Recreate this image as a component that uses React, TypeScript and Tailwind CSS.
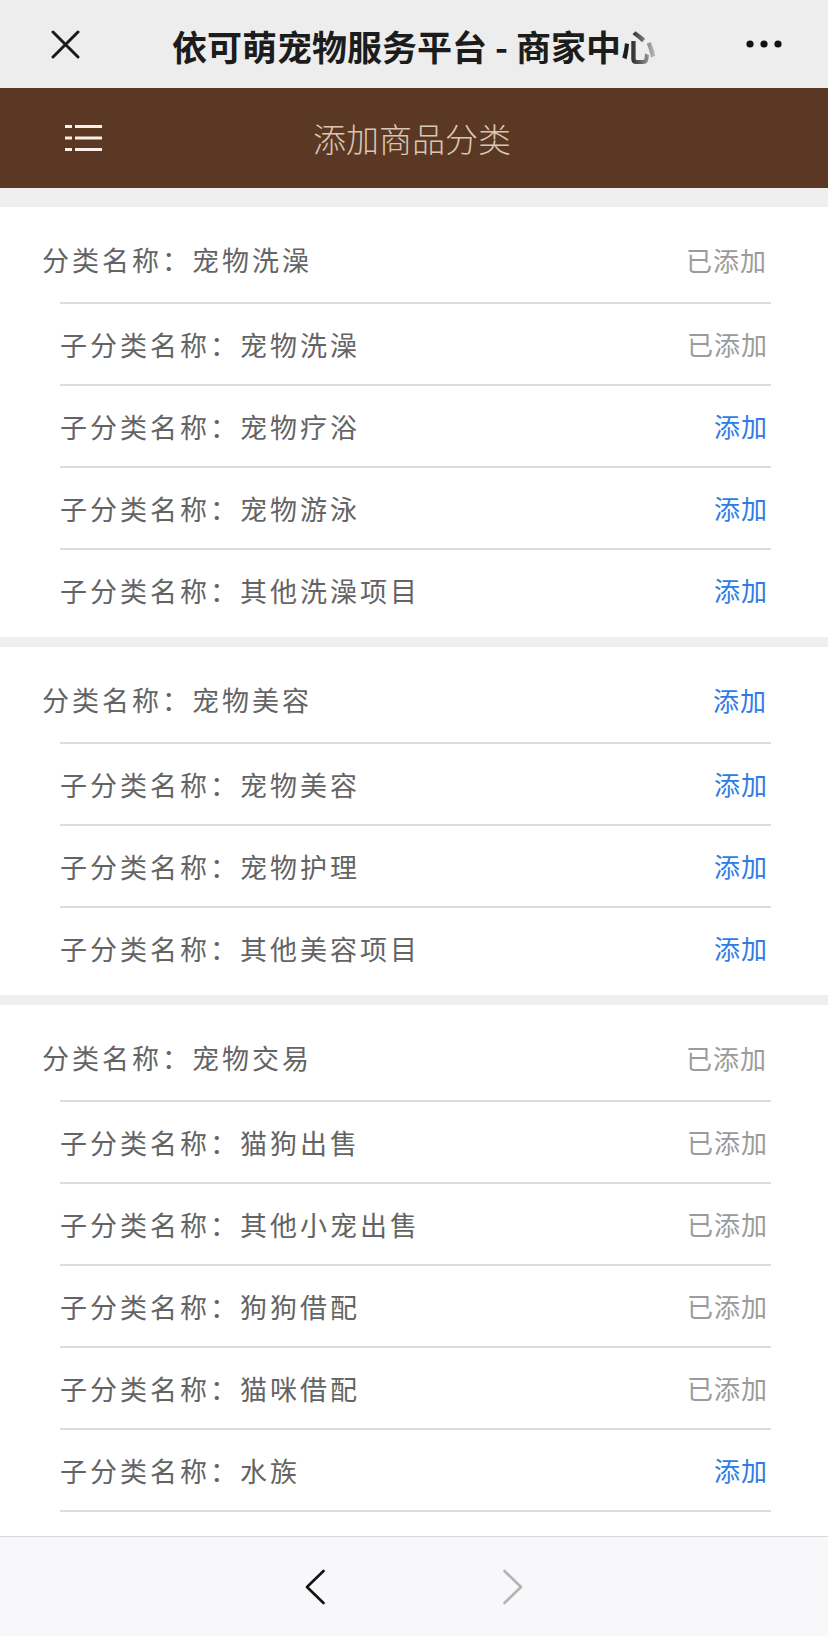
import React from 'react';

type Sub = { name: string; added: boolean };
type Category = { name: string; added: boolean; subs: Sub[] };

const categories: Category[] = [
    {
        name: '宠物洗澡',
        added: true,
        subs: [
            { name: '宠物洗澡', added: true },
            { name: '宠物疗浴', added: false },
            { name: '宠物游泳', added: false },
            { name: '其他洗澡项目', added: false },
        ],
    },
    {
        name: '宠物美容',
        added: false,
        subs: [
            { name: '宠物美容', added: false },
            { name: '宠物护理', added: false },
            { name: '其他美容项目', added: false },
        ],
    },
    {
        name: '宠物交易',
        added: true,
        subs: [
            { name: '猫狗出售', added: true },
            { name: '其他小宠出售', added: true },
            { name: '狗狗借配', added: true },
            { name: '猫咪借配', added: true },
            { name: '水族', added: false },
        ],
    },
];

function Status({ added }: { added: boolean }) {
    // 已添加 -> 灰色, 添加 -> 蓝色可点
    return added ? (
        <span className="text-[26px] tracking-[1px] -mr-[1px] text-[#9b9b9b]">已添加</span>
    ) : (
        <button className="text-[26px] tracking-[1px] -mr-[1px] text-[#2f7ce6]">添加</button>
    );
}

export default function App() {
    return (
        <div className="w-[828px] h-[1636px] flex flex-col bg-[#efefef] overflow-hidden font-['Noto_Sans_CJK_SC','Noto_Sans',sans-serif] leading-none">
            {/* 顶部标题栏 */}
            <header className="h-[88px] shrink-0 bg-[#ededed] grid grid-cols-[130px_1fr_130px] items-center">
                <div className="pl-[51px]">
                    <svg width="29" height="29" viewBox="0 0 29 29">
                        <path d="M2 2 L27 27 M27 2 L2 27" stroke="#1a1a1a" strokeWidth="3" strokeLinecap="round" />
                    </svg>
                </div>
                <h1 className="text-center text-[35px] font-bold text-[#1c1c1c] whitespace-nowrap pt-[2px]">
                    依可萌宠物服务平台 - 商家中
                    <span className="bg-linear-to-r from-[#1c1c1c] from-20% to-[#c4c4c4] bg-clip-text text-transparent">心</span>
                </h1>
                <div className="flex justify-end pr-[46px]">
                    <svg width="36" height="8" viewBox="0 0 36 8">
                        <circle cx="4" cy="4" r="3.6" fill="#111" />
                        <circle cx="18" cy="4" r="3.6" fill="#111" />
                        <circle cx="32" cy="4" r="3.6" fill="#111" />
                    </svg>
                </div>
            </header>

            {/* 页面头部 */}
            <div className="h-[100px] shrink-0 bg-[#5a3823] grid grid-cols-[130px_1fr_130px] items-center">
                <div className="pl-[65px]">
                    <svg width="37" height="28" viewBox="0 0 37 28">
                        <g fill="#fbefe6">
                            <rect x="0" y="1" width="7" height="3" />
                            <rect x="10" y="1" width="27" height="3" />
                            <rect x="0" y="12.5" width="7" height="3" />
                            <rect x="10" y="12.5" width="27" height="3" />
                            <rect x="0" y="24" width="7" height="3" />
                            <rect x="10" y="24" width="27" height="3" />
                        </g>
                    </svg>
                </div>
                <h2 className="text-center text-[33px] font-light text-[#d9c6b6] -ml-[4px]">添加商品分类</h2>
                <div />
            </div>

            {/* 分类列表 */}
            <main className="flex-1 overflow-hidden pt-[19px] flex flex-col gap-[10px]">
                {categories.map((cat, i) => (
                    <section
                        key={cat.name}
                        className={i === categories.length - 1 ? 'bg-white pt-[10px] pb-[7px] flex-1' : 'bg-white pt-[10px] pb-[7px] shrink-0'}
                    >
                        <div className="h-[85px] flex items-center justify-between pl-[42px] pr-[62px]">
                            <span className="text-[27px] tracking-[3px] text-[#646464]">分类名称：{cat.name}</span>
                            <Status added={cat.added} />
                        </div>
                        <ul className="ml-[60px] mr-[57px]">
                            {cat.subs.map((sub, j) => (
                                <li
                                    key={sub.name}
                                    className={
                                        i === categories.length - 1 && j === cat.subs.length - 1
                                            ? 'h-[84px] border-y-2 border-[#dddddd] flex items-center justify-between pr-[4px]'
                                            : 'h-[82px] border-t-2 border-[#dddddd] flex items-center justify-between pr-[4px]'
                                    }
                                >
                                    <span className="text-[27px] tracking-[3px] text-[#646464]">子分类名称：{sub.name}</span>
                                    <Status added={sub.added} />
                                </li>
                            ))}
                        </ul>
                    </section>
                ))}
            </main>

            {/* 底部前进后退 */}
            <footer className="h-[100px] shrink-0 bg-[#f8f8fa] border-t border-[#d9d9d9] flex items-center justify-center gap-[178px]">
                <svg width="20" height="36" viewBox="0 0 20 36">
                    <path d="M18.5 2 L2 18 L18.5 34" fill="none" stroke="#111" strokeWidth="2.6" strokeLinecap="round" strokeLinejoin="round" />
                </svg>
                <svg width="20" height="36" viewBox="0 0 20 36">
                    <path d="M1.5 2 L18 18 L1.5 34" fill="none" stroke="#b4b4b4" strokeWidth="2.6" strokeLinecap="round" strokeLinejoin="round" />
                </svg>
            </footer>
        </div>
    );
}
